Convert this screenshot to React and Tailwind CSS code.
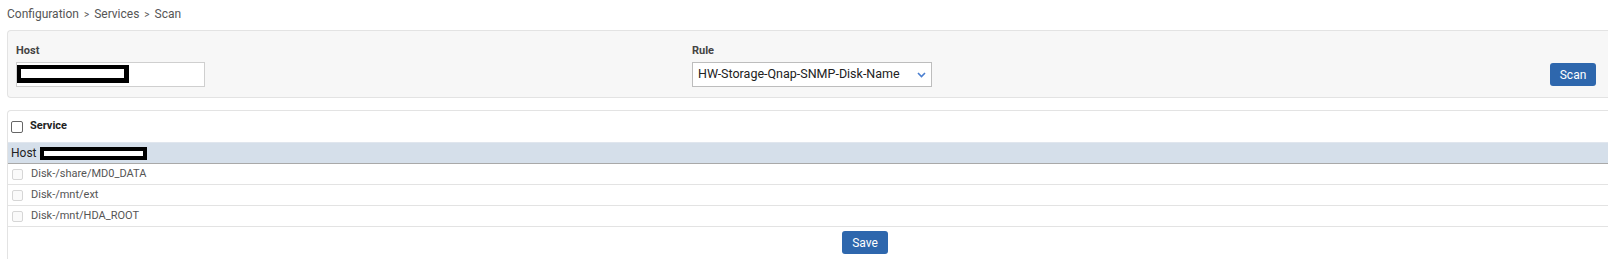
import React from "react";

export default function App() {
  const rows = ["Disk-/share/MD0_DATA", "Disk-/mnt/ext", "Disk-/mnt/HDA_ROOT"];
  return (
    <div className="w-[1608px] h-[259px] overflow-hidden bg-white text-[12px] text-[#555]" style={{ fontFamily: "Roboto, 'Liberation Sans', sans-serif" }}>
      <div className="h-[30px] pl-[7px] pt-[6px] text-[#555] leading-[16px]">
        Configuration <span className="text-[10px] px-[2px]">&gt;</span> Services <span className="text-[10px] px-[2px]">&gt;</span> Scan
      </div>
      <div className="ml-[7px] h-[68px] bg-[#f7f7f7] border border-r-0 border-[#e3e3e3] rounded-l-[4px] flex items-start">
        <div className="w-[684px] pl-[8px] pt-[13px] flex flex-col">
          <div className="font-bold text-[11px] text-[#444] leading-[14px]">Host</div>
          <div className="mt-[4px] w-[189px] h-[25px] bg-white border border-[#cfcfcf] flex items-start">
            <span className="mt-[2px] w-[112px] h-[18px] bg-black pl-[4px] pr-[5px] pt-[4px] pb-[5px] flex">
              <span className="block bg-white w-full h-full" />
            </span>
          </div>
        </div>
        <div className="w-[600px] pt-[13px] flex flex-col">
          <div className="font-bold text-[11px] text-[#444] leading-[14px]">Rule</div>
          <div className="mt-[4px] w-[240px] h-[25px] bg-white border border-[#bdbdbd] flex items-center justify-between pl-[5px] pr-[5px] text-[#222] text-[12.5px]">
            <span>HW-Storage-Qnap-SNMP-Disk-Name</span>
            <svg width="9" height="6" viewBox="0 0 9 6" className="mt-[1px]"><path d="M1 1l3.5 3.5L8 1" stroke="#4a7fd0" strokeWidth="1.6" fill="none" /></svg>
          </div>
        </div>
        <div className="flex-1 flex justify-end pr-[12px] pt-[32px]">
          <button className="w-[46px] h-[23px] bg-[#2e67ad] text-white rounded-[3px] text-[12px]">Scan</button>
        </div>
      </div>
      <div className="ml-[7px] mt-[12px] h-[160px] border-l border-t border-[#e3e3e3] rounded-tl-[4px] text-[11px]">
        <div className="h-[31px] flex items-center pl-[3px]">
          <span className="w-[12px] h-[12px] border border-[#666] rounded-[2px] bg-white" />
          <span className="ml-[7px] font-bold text-[#222]">Service</span>
        </div>
        <div className="h-[22px] bg-[#d5dfea] border-t border-[#e0e6ee] border-b border-b-[#a9a9a9] flex items-center pl-[3px] text-[#222] text-[12px]">
          <span>Host :</span>
          <span className="-ml-[2px] w-[107px] h-[13px] bg-black px-[4px] py-[4px] flex">
            <span className="block bg-white w-full h-full" />
          </span>
        </div>
        {rows.map((r) => (
          <div key={r} className="h-[21px] border-b border-[#e3e3e3] flex items-center pl-[4px]">
            <span className="w-[11px] h-[11px] border border-[#d6d6d6] rounded-[2px] bg-[#fafafa]" />
            <span className="ml-[8px] text-[#555]">{r}</span>
          </div>
        ))}
        <div className="pt-[4px] pl-[834px]">
          <button className="w-[46px] h-[23px] bg-[#2e67ad] text-white rounded-[3px] text-[12px]">Save</button>
        </div>
      </div>
    </div>
  );
}
